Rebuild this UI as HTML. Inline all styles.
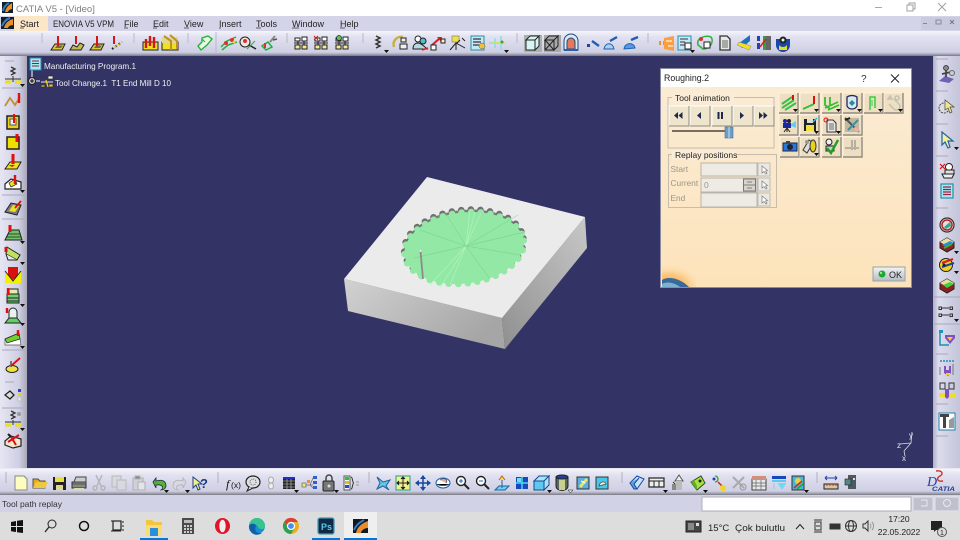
<!DOCTYPE html>
<html><head><meta charset="utf-8"><style>
html,body{margin:0;padding:0;width:960px;height:540px;overflow:hidden;background:#333366}
svg{display:block;font-family:"Liberation Sans",sans-serif;filter:blur(.35px)}
</style></head><body>
<svg width="960" height="540" viewBox="0 0 960 540" xmlns="http://www.w3.org/2000/svg">
<defs>
<linearGradient id="tb" x1="0" y1="0" x2="0" y2="1"><stop offset="0" stop-color="#f4f4fb"/><stop offset=".25" stop-color="#e0e0f0"/><stop offset=".85" stop-color="#cfcfe4"/><stop offset=".95" stop-color="#9a9aa8"/><stop offset="1" stop-color="#77777f"/></linearGradient>
<linearGradient id="lb" x1="0" y1="0" x2="1" y2="0"><stop offset="0" stop-color="#e6e6f3"/><stop offset=".7" stop-color="#cfcfe4"/><stop offset="1" stop-color="#a8a8b8"/></linearGradient>
<linearGradient id="rb" x1="0" y1="0" x2="1" y2="0"><stop offset="0" stop-color="#b0b0c4"/><stop offset=".2" stop-color="#dcdcee"/><stop offset="1" stop-color="#c4c4da"/></linearGradient>
<linearGradient id="lf" x1="0" y1="0" x2="1" y2=".5"><stop offset="0" stop-color="#d2d2d2"/><stop offset="1" stop-color="#a6a6a6"/></linearGradient>
<linearGradient id="rf" x1="0" y1="1" x2="1" y2="0"><stop offset="0" stop-color="#8f8f8f"/><stop offset="1" stop-color="#c8c8c8"/></linearGradient>
<linearGradient id="dlg" x1="0" y1="0" x2="0" y2="1"><stop offset="0" stop-color="#faecd6"/><stop offset="1" stop-color="#fde3ba"/></linearGradient>
<linearGradient id="ok" x1="0" y1="0" x2="0" y2="1"><stop offset="0" stop-color="#f4f4f4"/><stop offset="1" stop-color="#b4bcc8"/></linearGradient>
<radialGradient id="glow" cx="0.2" cy="1" r="1"><stop offset="0" stop-color="#f7a030"/><stop offset=".55" stop-color="#fbc880"/><stop offset="1" stop-color="#fde3ba" stop-opacity="0"/></radialGradient>

<g id="plate"><path d="M-7 7 L-3 1 H7 L4 7Z" fill="#dcc838" stroke="#222" stroke-width="1"/><path d="M-3 5H3L5 2.500H-1Z" fill="#6a6a50"/><path d="M0 -7V2" stroke="#d01818" stroke-width="2"/><path d="M-2 1L0 4L2 1Z" fill="#d01818"/></g>
<g id="plate2"><path d="M-7 7 L-4 2 L0 4 L3 0 L7 2 L4 7Z" fill="#c8b850" stroke="#222" stroke-width="1"/><path d="M-1 -7V1" stroke="#d01818" stroke-width="2"/></g>
<g id="bars"><path d="M-7 -1H8V7H-7Z" fill="#f0e020" stroke="#222"/><path d="M-4 -4V5M0 -7V3M4 -6V5" stroke="#d01818" stroke-width="2.400"/></g>
<g id="pers"><path d="M-6 -5h5v3h-5zM1 -6h5v4h-5z" fill="#fff" stroke="#222"/><path d="M-6 2h5v4h-5zM1 2h5v4h-5z" fill="#f5ea90" stroke="#222"/><path d="M-3 -2V2M3 -2V2M-7 0H7" stroke="#222"/></g>
<g id="green"><path d="M-7 5L5 -3M-7 1L3 -6M-4 7L7 0" stroke="#38c048" stroke-width="2"/><path d="M4 -8V-3" stroke="#e01010" stroke-width="2"/></g>
<g id="btn"><rect x="0" y="0" width="20" height="20" fill="#efe4cc"/><path d="M0 20V0H20" fill="none" stroke="#fff"/><path d="M20 0V20H0" fill="none" stroke="#8f8a80"/></g>
<g id="btn2"><rect x="0" y="0" width="19" height="20" fill="#efdfc2"/><path d="M0 20V0H19" fill="none" stroke="#fff3e0"/><path d="M19 0V20H0" fill="none" stroke="#8f8a80" stroke-width="1.400"/></g>
<g id="pick"><rect x="0" y="0" width="12" height="13" fill="#ece8e2" stroke="#bbb"/><path d="M4 3V10L6 8.500L8 11L9 10.300L7.500 8L9.500 7.500Z" fill="#fff" stroke="#888" stroke-width=".8"/></g>
</defs>

<rect width="960" height="540" fill="#333366"/>

<!-- title -->
<rect width="960" height="16" fill="#fff"/>
<rect x="2" y="2" width="11" height="11" fill="#10202c"/><path d="M5 12C6 7 9 5 12 3L12 9C10 9 8 11 8 12Z" fill="#e8902c"/><path d="M3 11C4 6 7 4 9 3" stroke="#3a7ac0" stroke-width="2" fill="none"/>
<text x="16" y="12" font-size="9.500" fill="#808080">CATIA V5 - [Video]</text>
<path d="M875 7.500h7" stroke="#a8a8a8"/><path d="M907 5h6v6h-6zM909 5V3h6v6h-2" fill="none" stroke="#a0a0a0"/><path d="M938 3l8 8M946 3l-8 8" stroke="#a0a0a0"/>

<!-- menu -->
<rect y="16" width="960" height="15" fill="#d4d4e9"/>
<rect x="921" y="17" width="39" height="13" fill="#cacade"/>
<rect x="14" y="16" width="34" height="15" fill="#fbe6c8"/>
<rect x="1" y="17" width="13" height="12" fill="#10202c"/><path d="M4 28C5 23 9 20 13 19L13 25C10 25 8 27 8 28Z" fill="#e8902c"/><path d="M2 26C4 21 7 19 10 18" stroke="#3a7ac0" stroke-width="2" fill="none"/>
<g font-size="9" fill="#222">
<text x="20" y="27">Start</text>
<text x="53" y="27" textLength="61" lengthAdjust="spacingAndGlyphs">ENOVIA V5 VPM</text>
<text x="124" y="27">File</text>
<text x="153" y="27">Edit</text>
<text x="184" y="27">View</text>
<text x="219" y="27">Insert</text>
<text x="256" y="27">Tools</text>
<text x="292" y="27">Window</text>
<text x="340" y="27">Help</text>
</g>
<g stroke="#333" stroke-width=".7"><path d="M20 28h4M124 28h4M153 28h4M184 28h5M219 28h2M256 28h5M292 28h7M340 28h5"/></g>
<path d="M923 23h4v1h-4z" fill="#888"/><path d="M936 20h5v4h-5z" fill="none" stroke="#8a8a98"/><path d="M950 20l4 4M954 20l-4 4" stroke="#777" stroke-width="1"/>

<!-- top toolbar -->
<rect y="31" width="960" height="25" fill="url(#tb)"/>
<g stroke="#b8b8c8"><path d="M42 33V43M134 33V43M188 33V43M216 32V54M287 33V43M363 33V43M517 33V43M648 33V43"/></g>
<g>
<use href="#plate" x="58" y="43"/><use href="#plate2" x="77" y="43"/><use href="#plate" x="97" y="43"/>
<g transform="translate(116 43)"><path d="M-2 -7V1" stroke="#d01818" stroke-width="2"/><path d="M-4 6L6 -1" stroke="#222" stroke-width="2" stroke-dasharray="2 2"/><path d="M-3 5L5 0" stroke="#f0d020" stroke-width="1"/></g>
<use href="#bars" x="150" y="43"/>
<g transform="translate(170 43)"><path d="M-8 -1H8V7H-8Z" fill="#f0e020" stroke="#222"/><path d="M-8 -6H8V0H-8Z" fill="#e0d890"/><path d="M-6 -7L1 -2V7M0 -8L7 -2V6" stroke="#c09020" stroke-width="2" fill="none"/></g>
<g transform="translate(205 43)"><path d="M-7 3L-3 -1 -3 -5 3 -7 7 -4 2 2 -4 7Z" fill="#e8f8e8" stroke="#20b030" stroke-width="1.300"/><path d="M-3 -4l3 3" stroke="#20b030"/></g>
<g transform="translate(229 43)"><path d="M-8 4L-2 -2 7 -6M-7 7L-1 2 8 -1" stroke="#20b040" stroke-width="1.500" fill="none"/><circle cx="-3" cy="0" r="2" fill="#e03030"/><circle cx="3" cy="-3" r="2" fill="#e03030"/><circle cx="5" cy="-1" r="1.500" fill="#e8d020"/></g>
<g transform="translate(248 43)"><circle cx="-3" cy="-1" r="5" fill="#f0e8e0" stroke="#222"/><circle cx="-3" cy="-2" r="2" fill="#e03030"/><path d="M1 2L8 6" stroke="#222" stroke-width="1.500"/><path d="M-1 6L7 -2" stroke="#20b040"/></g>
<g transform="translate(269 43)"><path d="M-7 3L-1 -1 3 4 -3 7Z" fill="none" stroke="#20b040" stroke-width="1.500"/><path d="M-4 0V5" stroke="#e03030" stroke-width="2"/><path d="M1 -1L6 -7" stroke="#888" stroke-width="2"/><path d="M4 -3l4 -1" stroke="#555" stroke-width="1.500"/></g>
<use href="#pers" x="301" y="43"/>
<g transform="translate(321 43)"><use href="#pers"/><path d="M-7 -7l4 4M-3 -7l-4 4" stroke="#d02020"/></g>
<g transform="translate(342 43)"><use href="#pers"/><circle cx="-3" cy="-5" r="2.500" fill="#60c060" stroke="#222" stroke-width=".7"/></g>
<g transform="translate(378 43)" fill="none" stroke="#333" stroke-width="1.500"><path d="M-2 -7l4 2-4 2 4 2-4 2 4 2-4 2"/></g>
<path d="M384 50h5l-2.500 3z" fill="#111"/>
<g transform="translate(400 43)"><path d="M-6 4C-8 -2 -3 -7 3 -6" fill="none" stroke="#c8b040" stroke-width="2.400"/><rect x="1" y="-5" width="5" height="4" fill="#eee" stroke="#222"/><rect x="0" y="1" width="7" height="5" fill="#f0f0f0" stroke="#222"/></g>
<g transform="translate(420 43)"><circle cx="-2" cy="-4" r="3" fill="#fff" stroke="#222"/><circle cx="3" cy="-2" r="3" fill="#50c0c8" stroke="#222"/><path d="M-7 6C-7 1 -4 0 -2 0S3 2 7 6Z" fill="#b8d8e0" stroke="#222"/><path d="M2 7l6-2" stroke="#d02020" stroke-width="1.500"/></g>
<g transform="translate(438 43)"><path d="M-7 3L2 -5" stroke="#d02020" stroke-width="2"/><path d="M-1 -6h5l-1 5z" fill="#d02020"/><rect x="-7" y="2" width="5" height="5" fill="#fff" stroke="#222"/><rect x="3" y="-4" width="4" height="4" fill="#f4f0c0" stroke="#222"/></g>
<g transform="translate(458 43)"><path d="M-2 -7V7M-2 0L7 5M-2 0L-8 7" stroke="#222" fill="none"/><path d="M-6 -7h7v6h-7z" fill="#f0e040" stroke="#888" stroke-width=".7"/><path d="M4 -5l3 3M-2 1l4-4" stroke="#222"/></g>
<g transform="translate(478 43)"><rect x="-7" y="-7" width="13" height="14" fill="#c8e8f0" stroke="#2090b0"/><path d="M-5 -4h8M-5 -1h8M-5 2h6" stroke="#334" stroke-width="1.200"/><circle cx="4" cy="3" r="3" fill="#eec040" stroke="#555" stroke-width=".5"/></g>
<g transform="translate(498 43)"><path d="M-9 0H5M-3 -5V5M3 -7V7" stroke="#80e0f0" stroke-width="1.500"/><path d="M-7 0H7" stroke="#e8e020" stroke-width="1.300"/><circle cx="4" cy="-1" r="1.500" fill="#40a040"/></g>
<path d="M504 50h5l-2.500 3z" fill="#111"/>
<rect x="524" y="35" width="18" height="17" fill="#a9b3ab"/>
<g transform="translate(533 43)" fill="#d8f4f4" stroke="#222"><path d="M-7 -3h9v10h-9zM-7 -3l4 -4h9l-4 4zM2 -3l4 -4v10l-4 4z"/></g>
<rect x="544" y="35" width="17" height="17" fill="#a9a9ab"/>
<g transform="translate(552 43)" fill="none" stroke="#222"><path d="M-7 -3h9v10h-9zM-7 -3l4 -4h9l-4 4zM2 -3l4 -4v10l-4 4zM-7 7l9-10M-7 -3l9 10"/></g>
<g transform="translate(571 43)"><path d="M-7 7V-2A7 7 0 0 1 7 -2V7Z" fill="#d8ecf4" stroke="#204880"/><path d="M-4 6V-1A4 4 0 0 1 4 -1V6Z" fill="#e87858" stroke="#204880"/><path d="M-7 7H7" stroke="#2860b0" stroke-width="2"/></g>
<g transform="translate(593 43)"><path d="M-1 -2l7 5" stroke="#2060b0" stroke-width="2.400"/><rect x="-6" y="1" width="3" height="3" fill="#204890"/></g>
<g transform="translate(611 43)"><path d="M-1 -2l7 -4" stroke="#2060b0" stroke-width="2.400"/><path d="M-7 6C-6 -1 2 -1 3 6Z" fill="#a8d0f0" stroke="#2060b0"/></g>
<g transform="translate(631 43)"><path d="M0 -3l7 -3" stroke="#2060b0" stroke-width="2.400"/><path d="M-7 6C-6 -1 3 -1 4 5Z" fill="#5898e8" stroke="#2060b0"/></g>
<g transform="translate(666 43)"><path d="M-3 -2H-1V2H-3ZM-7 -2h2v4h-2z" fill="#f09030"/><path d="M-2 -5L8 -7V8L-2 6Z" fill="#f8a040"/><path d="M0 -2l6 0M2 3l5 0" stroke="#fff"/></g>
<g transform="translate(685 43)"><rect x="-7" y="-7" width="13" height="14" fill="#c8e8f0" stroke="#2090b0"/><path d="M-5 -4h8M-5 -1h5M-5 2h5" stroke="#334"/><rect x="0" y="0" width="6" height="6" fill="#fff" stroke="#222"/></g>
<path d="M690 50h5l-2.500 3z" fill="#111"/>
<g transform="translate(705 43)"><path d="M-7 2C-9 -5 0 -8 6 -6C9 -2 6 6 -2 6Z" fill="none" stroke="#30b040" stroke-width="1.500"/><circle cx="-4" cy="-4" r="2" fill="#e03030"/><rect x="-1" y="-1" width="6" height="6" fill="#fff" stroke="#222"/></g>
<g transform="translate(725 43)"><path d="M-5 -7h7l3 3v11h-10z" fill="#e8e8e8" stroke="#333" stroke-width="1.300"/><path d="M-3 -3h6v8h-6z" fill="#a8a8a8"/></g>
<g transform="translate(745 43)"><path d="M-7 1L5 -8V-2L-3 5Z" fill="#2070c0"/><path d="M-8 2L4 7 6 3 -6 -1Z" fill="#f0e020" stroke="#888" stroke-width=".5"/></g>
<g transform="translate(764 43)"><rect x="1" y="-7" width="6" height="14" fill="#666"/><rect x="-1" y="-7" width="3" height="14" fill="#30a040"/><path d="M-7 -7h3v5h-3zM-7 0h3v6h-3z" fill="#2040c0"/><path d="M-4 4L2 -4" stroke="#d02020" stroke-width="1.500"/></g>
<g transform="translate(783 43)"><path d="M-7 -4h14v6a7 7 0 0 1-14 0z" fill="#1848a8"/><circle cx="0" cy="-3" r="3.500" fill="#222"/><path d="M-4 2A5 5 0 0 0 4 2L4 7H-4Z" fill="#f0d820"/><circle cx="0" cy="-3" r="1.500" fill="#eee"/></g>
</g>

<!-- left toolbar -->
<rect x="0" y="56" width="27" height="413" fill="url(#lb)"/>
<g stroke="#a8a8ba"><path d="M2 88H25M2 195H25M2 219H25M2 350H25M2 408H25M5 61H14M5 382H14"/></g>
<g>
<g transform="translate(13 76)"><path d="M-2 -9l4 2-4 2 4 2-4 2" stroke="#333" fill="none" stroke-width="1.300"/><path d="M-8 6H-2M2 6H8" stroke="#e8e020" stroke-width="3"/><path d="M0 0V6M-8 3H8" stroke="#333"/></g><path d="M20 84h5l-2.500 3z" fill="#111"/>
<g transform="translate(13 100)"><path d="M-8 6L-3 -2 2 5 7 -3" fill="none" stroke="#c09030" stroke-width="1.800"/><path d="M6 -7V3" stroke="#e01010" stroke-width="2.400"/></g>
<g transform="translate(13 122)"><rect x="-6" y="-6" width="12" height="13" fill="#e8d020" stroke="#222" stroke-width="1.500"/><rect x="-3" y="-3" width="6" height="6" fill="#eee" stroke="#555"/><path d="M1 -8V1" stroke="#e01010" stroke-width="2"/></g>
<g transform="translate(13 142)"><rect x="-6" y="-5" width="12" height="12" fill="#f0e000" stroke="#222" stroke-width="1.500"/><path d="M4 -8V0" stroke="#e01010" stroke-width="3"/></g>
<g transform="translate(13 162)"><path d="M-8 7L-3 0H8L4 7Z" fill="#f0e020" stroke="#222"/><path d="M0 -8V2" stroke="#e01010" stroke-width="3"/><path d="M-4 3h6l-3 2z" fill="#e01010"/></g>
<g transform="translate(13 183)"><path d="M-8 1L-2 -4 8 -1V6H-8Z" fill="#fff" stroke="#222" stroke-width="1.200"/><path d="M-4 0L2 -4 4 1 -2 4Z" fill="#f0e020" stroke="#222" stroke-width=".7"/><path d="M2 -8V1" stroke="#e01010" stroke-width="2.400"/></g><path d="M20 190h5l-2.500 3z" fill="#111"/>
<g transform="translate(13 208)"><path d="M-8 4L-2 -5 8 -3 4 7Z" fill="#7a7a8a" stroke="#222"/><path d="M-4 3L0 -3 6 -2 2 4Z" fill="#f0e020"/><path d="M2 0L8 -7" stroke="#e01010" stroke-width="1.800"/></g>
<g transform="translate(13 233)"><path d="M-8 7L-3 -3H6L9 7Z" fill="#70c068" stroke="#222"/><path d="M-5 1H7M-6 4H8" stroke="#222" stroke-width=".8"/><path d="M-3 -8V-1" stroke="#e01010" stroke-width="3"/></g><path d="M20 241h5l-2.500 3z" fill="#111"/>
<g transform="translate(13 254)"><path d="M-6 -7L7 1 4 6 -7 0Z" fill="#c0e060" stroke="#222"/><path d="M-7 0L-5 6 4 6" fill="#e8e8e8" stroke="#222"/><path d="M-7 -7V-2" stroke="#e01010" stroke-width="3"/></g><path d="M20 262h5l-2.500 3z" fill="#111"/>
<g transform="translate(13 275)"><path d="M-8 -4L0 6 8 -4V8H-8Z" fill="#f0f000"/><path d="M-5 -8H5V0L0 5 -5 0Z" fill="#d81010"/><path d="M-8 -4L0 6 8 -4" stroke="#222" fill="none"/></g>
<g transform="translate(13 296)"><rect x="-6" y="-2" width="12" height="9" fill="#70d070" stroke="#222"/><path d="M-6 2H6M-6 5H6" stroke="#222"/><path d="M-4 -7h9v5h-9z" fill="#e8e8b0" stroke="#222"/><path d="M-5 -8V-1" stroke="#e01010" stroke-width="2.400"/></g><path d="M20 304h5l-2.500 3z" fill="#111"/>
<g transform="translate(13 316)"><path d="M-4 2V-4A4 4 0 0 1 4 -4V2" fill="#e8f0f0" stroke="#222"/><path d="M-8 7L-4 2H4L8 7Z" fill="#60d060" stroke="#222"/><path d="M-6 -8V-3" stroke="#e01010" stroke-width="2.400"/></g><path d="M20 323h5l-2.500 3z" fill="#111"/>
<g transform="translate(13 338)"><path d="M-8 1L6 -5 8 7H-8Z" fill="#fff" stroke="#555" stroke-width=".7"/><path d="M-8 1L6 -5 7 1 -6 5Z" fill="#70d030" stroke="#222" stroke-width=".7"/><path d="M5 -8V-2" stroke="#e01010" stroke-width="2.400"/></g><path d="M20 346h5l-2.500 3z" fill="#111"/>
<g transform="translate(13 365)"><ellipse cx="-1" cy="4" rx="6" ry="3.500" fill="#f0e040" stroke="#222"/><path d="M-2 -4V2" stroke="#777" stroke-width="2"/><path d="M-2 1L7 -7" stroke="#e01010" stroke-width="2"/></g>
<g transform="translate(13 395)"><path d="M-8 0L-3 -4 1 0 -3 4Z" fill="#ddd" stroke="#222" stroke-width="1.300"/><rect x="5" y="-6" width="3" height="3" fill="#3040c0"/><rect x="5" y="-2" width="3" height="3" fill="#e8d020"/><rect x="5" y="2" width="3" height="4" fill="#e8e8e8" stroke="#aaa" stroke-width=".5"/></g>
<g transform="translate(13 420)"><path d="M-2 -9l4 2-4 2 4 2-4 2" stroke="#333" fill="none" stroke-width="1.300"/><circle cx="6" cy="-6" r="2" fill="#999"/><path d="M-8 5H-2M2 5H8" stroke="#e8e020" stroke-width="3"/><path d="M0 0V5M-8 2H8" stroke="#333"/></g><path d="M20 428h5l-2.500 3z" fill="#111"/>
<g transform="translate(13 440)"><path d="M-8 1L-2 -4 8 -1V6L0 8 -8 5Z" fill="#f0e8d0" stroke="#222" stroke-width="1.200"/><path d="M-3 -5L3 5M-5 2L6 -5" stroke="#e01010" stroke-width="2"/><path d="M-5 -6L-2 -3" stroke="#222" stroke-width="2"/></g>
</g>

<!-- right toolbar -->
<rect x="933" y="56" width="27" height="413" fill="url(#rb)"/>
<g stroke="#a8a8ba"><path d="M936 59H948M936 91H948M936 124H948M936 156H948M936 208H948M934 297H960M934 324H960M936 354H948M936 404H948M936 436H948"/></g>
<g>
<g transform="translate(947 74)"><path d="M-8 7L-2 2 7 5 2 9Z" fill="#7060b8"/><circle cx="-1" cy="-6" r="2.500" fill="#888" stroke="#222" stroke-width=".7"/><path d="M-1 -4V3M-5 0L4 -2" stroke="#444" stroke-width="1.800"/><circle cx="5" cy="-1" r="2.500" fill="#ccc" stroke="#666"/></g>
<g transform="translate(947 107)"><circle cx="-3" cy="1" r="5" fill="#ddd" stroke="#444" stroke-dasharray="2 1"/><path d="M-2 -7V3L1 1 3 6 5 5 3 0H7Z" fill="#f0e890" stroke="#444" stroke-width=".7"/></g>
<g transform="translate(946 140)"><path d="M-4 -8V5L-1 2 2 8 4 7 2 1H7Z" fill="#f0f0a0" stroke="#2060a0" stroke-width="1.200"/></g><path d="M954 147h5l-2.500 3z" fill="#111"/>
<g transform="translate(948 170)"><circle cx="1" cy="-3" r="3.500" fill="#fff" stroke="#222"/><rect x="-3" y="0" width="9" height="4" fill="#ddd" stroke="#222"/><path d="M-6 4H6L4 8H-4Z" fill="#eee" stroke="#222"/><path d="M-8 -6L-3 -1M-3 -6L-8 -1" stroke="#e01010" stroke-width="1.200"/></g>
<g transform="translate(947 191)"><rect x="-6" y="-7" width="12" height="14" fill="#a8e8f0" stroke="#2090b0" stroke-width="1.200"/><path d="M-4 -4H4M-4 -1.500H4M-4 1H4M-4 3.500H4" stroke="#a02040" stroke-width="1.200"/></g>
<g transform="translate(947 225)"><circle cx="0" cy="0" r="7" fill="#e0e0e0" stroke="#333" stroke-width="1.200"/><circle cx="0" cy="0" r="5" fill="none" stroke="#c02020" stroke-width="1.500"/><path d="M-3 2L3 -3 4 1 -1 4Z" fill="#30a890"/></g>
<g transform="translate(947 244)"><path d="M-7 -2L0 -6 7 -2V4L0 8 -7 4Z" fill="#902020" stroke="#222"/><path d="M-7 -2L0 -6 7 -2 0 2Z" fill="#e8e0a0"/><path d="M-5 1L3 -3 7 -1 -1 3" fill="#2090e0"/><path d="M-3 4L5 0" stroke="#30b040" stroke-width="2"/></g><path d="M954 251h5l-2.500 3z" fill="#111"/>
<g transform="translate(947 265)"><circle cx="-1" cy="0" r="6.500" fill="#f0d020" stroke="#222"/><path d="M-5 -2L6 -6" stroke="#d02020" stroke-width="2"/><path d="M-5 2L7 -2" stroke="#2040a0" stroke-width="2"/><circle cx="-3" cy="0" r="1.500" fill="#222"/></g><path d="M954 271h5l-2.500 3z" fill="#111"/>
<g transform="translate(947 285)"><path d="M-7 -2L0 -6 7 -2V4L0 8 -7 4Z" fill="#902020" stroke="#222"/><path d="M-7 -2L0 -6 7 -2 0 2Z" fill="#e8e0a0"/><path d="M-4 0L3 -3 7 -1 0 3Z" fill="#40d040"/></g>
<g transform="translate(946 312)" fill="none" stroke="#333"><rect x="-7" y="-5" width="2.500" height="2.500"/><rect x="4" y="-5" width="2.500" height="2.500"/><rect x="-7" y="2" width="2.500" height="2.500"/><rect x="4" y="2" width="2.500" height="2.500"/><path d="M-4 -4H3M-4 3H3"/></g><path d="M954 319h5l-2.500 3z" fill="#111"/>
<g transform="translate(947 338)"><path d="M-7 -7V7H2" fill="none" stroke="#2090b0" stroke-width="1.500"/><path d="M-2 -3H8V0L3 6 -2 0Z" fill="#8050c0"/><path d="M0 -1H6L3 3Z" fill="#f0d020"/><rect x="-8" y="-8" width="4" height="3" fill="#2090c0"/></g>
<g transform="translate(947 368)"><path d="M-7 -7H7" stroke="#2090b0" stroke-width="1.500" stroke-dasharray="2 1"/><path d="M-7 -1V7M6 -4V7" stroke="#777"/><path d="M-3 -2V5L1 8 4 5V-2L2 -2V2H-1V-2Z" fill="#8050c0"/><path d="M-1 5h4v2h-4z" fill="#f0d020"/></g>
<g transform="translate(947 390)"><rect x="-7" y="-7" width="5" height="6" fill="none" stroke="#333"/><rect x="2" y="-7" width="5" height="6" fill="none" stroke="#333"/><path d="M-8 3H8V7H-8Z" fill="#f0e020"/><path d="M-2 -1H2V7L0 9 -2 7Z" fill="#8050c0"/></g>
<g transform="translate(947 421)"><rect x="-8" y="-8" width="16" height="17" fill="#fff" stroke="#2080b0" stroke-width="1"/><path d="M-7 -7H2V-4H-1V7H-4V-4H-7Z" fill="#444"/><path d="M2 7V-1L7 -4V7Z" fill="#999"/></g>
</g>

<!-- 3D part -->
<path d="M344 279L348 311 505 349 502 318Z" fill="url(#lf)"/>
<path d="M502 318L505 349 587 248 585 217Z" fill="url(#rf)"/>
<path d="M427 177L585 217 502 318 344 279Z" fill="#ebebeb"/>
<g transform="rotate(-7 464 247)">
<ellipse cx="464" cy="245.500" rx="60" ry="35.500" fill="#7c7c7c"/>
<ellipse cx="464" cy="245.500" rx="60" ry="35.500" fill="none" stroke="#707070" stroke-width="6.500" stroke-linecap="round" stroke-dasharray="0 9.600"/>
<ellipse cx="464" cy="248" rx="60" ry="35.500" fill="#92e8a4"/>
<ellipse cx="464" cy="248" rx="60" ry="35.500" fill="none" stroke="#92e8a4" stroke-width="6.500" stroke-linecap="round" stroke-dasharray="0 9.600"/>
</g>
<g stroke="#b4f4c0" stroke-width=".7" opacity=".9"><path d="M466 246L475 212M466 246L470 210M466 246L481 213M466 246L430 285M466 246L440 288M466 246L450 285"/></g>
<g stroke="#70c888" stroke-width=".5" opacity=".8"><path d="M466 246L414 258M466 246L525 232M466 246L518 215M466 246L420 230M466 246L490 279M466 246L520 255M466 246L445 212"/></g>
<path d="M420.500 251L423 279" stroke="#8c8c8c" stroke-width="1.800"/>
<circle cx="420.500" cy="251" r="1" fill="#eee"/>

<!-- spec tree -->
<path d="M32 66V80H36" stroke="#fff" fill="none"/>
<rect x="30" y="58" width="11" height="12" fill="#a8e8f0" stroke="#2090b0"/>
<path d="M32 61h7M32 63.500h7M32 66h7" stroke="#902040"/>
<circle cx="32" cy="81" r="3.500" fill="#ccc" stroke="#222"/><path d="M30 81h4M32 79v4" stroke="#111"/>
<path d="M36 81h4" stroke="#fff"/>
<g transform="translate(47 81)"><path d="M-6 1H6" stroke="#e8e8e8"/><path d="M-5 -2l3-3M1 -5h5v3h-5z" fill="#eee" stroke="#333" stroke-width=".8"/><path d="M-6 4h4v2h-4zM2 3h4v3h-4z" fill="#e0c040" stroke="#333" stroke-width=".8"/><path d="M-1 -1L1 6" stroke="#f0d020" stroke-width="1.300"/></g>
<text x="44" y="69" font-size="8.500" fill="#f0f0f0" textLength="92" lengthAdjust="spacingAndGlyphs">Manufacturing Program.1</text>
<text x="55" y="86" font-size="8.500" fill="#f0f0f0" xml:space="preserve" textLength="116" lengthAdjust="spacingAndGlyphs">Tool Change.1  T1 End Mill D 10</text>

<!-- axis -->
<g stroke="#ddd" stroke-width=".8" fill="none"><path d="M904 451L911 443 912 432M911 443L900 444M904 451L905 456"/></g>
<g fill="#e8e8e8" font-size="8"><text x="909" y="438">y</text><text x="897" y="448">z</text><text x="902" y="461">x</text></g>

<!-- dialog -->
<rect x="660" y="68" width="252" height="220" fill="#8c8ca0"/>
<rect x="661" y="69" width="250" height="218" fill="url(#dlg)"/>
<rect x="661" y="69" width="250" height="18" fill="#fff"/>
<text x="664" y="81" font-size="8.800" fill="#222">Roughing.2</text>
<text x="861" y="82" font-size="10" fill="#333">?</text>
<path d="M891 74.500l8 8M899 74.500l-8 8" stroke="#222" stroke-width="1"/>
<rect x="662" y="264" width="34" height="23" fill="url(#glow)"/>
<path d="M662 280C668 276 680 278 689 287H662Z" fill="#3a6a9c"/><path d="M662 284C667 281 675 283 680 287H662Z" fill="#7eb0d0"/>

<rect x="668" y="97.500" width="106" height="50.500" fill="none" stroke="#c4bdb0"/>
<rect x="672" y="93" width="62" height="10" fill="#faecd6"/>
<text x="675" y="101" font-size="8.500" fill="#222">Tool animation</text>
<rect x="668.500" y="154.500" width="108" height="53" fill="none" stroke="#c4bdb0"/>
<rect x="672" y="150" width="64" height="10" fill="#faecd6"/>
<text x="675" y="158" font-size="8.500" fill="#222">Replay positions</text>

<g transform="translate(669 106)"><use href="#btn"/></g>
<g transform="translate(690 106)"><use href="#btn"/></g>
<g transform="translate(712 106)"><use href="#btn"/></g>
<g transform="translate(733 106)"><use href="#btn"/></g>
<g transform="translate(754 106)"><use href="#btn"/></g>
<g fill="#1c2a50"><path d="M678 112L674 115.500 678 119ZM682.500 112L678.500 115.500 682.500 119Z"/><path d="M701 112L697 115.500 701 119Z"/><path d="M717.500 112h2v7h-2zM721 112h2v7h-2z"/><path d="M740 112L744 115.500 740 119Z"/><path d="M759 112L763 115.500 759 119ZM763.500 112L767.500 115.500 763.500 119Z"/></g>
<path d="M672 131H727" stroke="#444" stroke-width="1.500"/>
<rect x="725" y="127" width="8" height="11" fill="#6b9fc8" stroke="#4a6f96" stroke-width=".6"/><path d="M729 127V138" stroke="#c8dcee" stroke-width="1"/>

<g font-size="8.300" fill="#9a958a"><text x="670.500" y="172">Start</text><text x="670.500" y="186">Current</text><text x="670.500" y="201">End</text></g>
<rect x="701" y="163" width="56" height="13" fill="#eeebe4" stroke="#b8b4ac"/>
<rect x="701" y="178" width="56" height="14" fill="#eeebe4" stroke="#b8b4ac"/>
<rect x="701" y="193" width="56" height="14" fill="#eeebe4" stroke="#b8b4ac"/>
<text x="704" y="188" font-size="8.500" fill="#999">0</text>
<rect x="743.500" y="179" width="12" height="12" fill="#d8d4cc" stroke="#777"/><path d="M744 185h11M747 182h5M747 188h5" stroke="#666" stroke-width=".8"/>
<use href="#pick" x="758" y="163"/><use href="#pick" x="758" y="178"/><use href="#pick" x="758" y="193"/>

<g transform="translate(779 93)"><use href="#btn2"/></g><g transform="translate(800 93)"><use href="#btn2"/></g><g transform="translate(822 93)"><use href="#btn2"/></g><g transform="translate(843 93)"><use href="#btn2"/></g><g transform="translate(864 93)"><use href="#btn2"/></g><g transform="translate(884 93)"><use href="#btn2"/></g>
<g transform="translate(779 115)"><use href="#btn2"/></g><g transform="translate(800 115)"><use href="#btn2"/></g><g transform="translate(822 115)"><use href="#btn2"/></g><g transform="translate(843 115)"><use href="#btn2"/></g>
<g transform="translate(780 137)"><use href="#btn2"/></g><g transform="translate(800 137)"><use href="#btn2"/></g><g transform="translate(822 137)"><use href="#btn2"/></g><g transform="translate(843 137)"><use href="#btn2"/></g>

<use href="#green" x="789" y="103"/>
<g transform="translate(810 103)"><path d="M-7 6L4 1" stroke="#30c030" stroke-width="1.800"/><path d="M4 -7V1" stroke="#e01010" stroke-width="2"/></g>
<g transform="translate(831 103)"><path d="M-6 -6V2L-1 6M-1 -6V2" stroke="#30c030" stroke-width="1.800" fill="none"/><path d="M-6 5L7 -1M-3 7L8 2" stroke="#30c030" stroke-width="1.600"/></g>
<g transform="translate(852 103)"><path d="M-5 -6C-2 -8 2 -8 5 -6V3C3 7 -3 7 -5 3Z" fill="#d8e8f0" stroke="#202860" stroke-width="1.300"/><path d="M0 -3l3 3-3 3-3-3z" fill="#2090a0"/></g>
<g transform="translate(873 103)"><path d="M-3 7V-6H2V5" fill="none" stroke="#30d040" stroke-width="1.500"/><path d="M-1 -3V3" stroke="#30d040"/></g>
<g transform="translate(894 103)" stroke="#c4c0b4" fill="none" stroke-width="1.500"><path d="M-6 -4l2-3 2 3zM0 -4l5 5a3 3 0 0 1-5 5l-5-5"/><circle cx="3" cy="-5" r="2"/></g>
<path d="M793 109h5l-2.500 3zM814 109h5l-2.500 3zM836 109h5l-2.500 3zM857 109h5l-2.500 3zM878 109h5l-2.500 3zM898 109h5l-2.500 3z" fill="#111"/>

<g transform="translate(789 125)"><rect x="-6" y="-2" width="8" height="5" fill="#1828a0"/><circle cx="-4" cy="-4" r="2" fill="#1828a0"/><circle cx="0" cy="-4" r="2" fill="#222"/><path d="M2 -1L7 -4V3L2 1Z" fill="#60d0f0"/><path d="M-2 3L-5 7M-2 3V7M-2 3L1 7" stroke="#222"/></g>
<g transform="translate(810 125)"><rect x="-6" y="-6" width="12" height="12" fill="#222"/><rect x="-3" y="-6" width="6" height="4" fill="#ddd"/><rect x="-4" y="0" width="8" height="6" fill="#f0e040"/><path d="M3 -3l4-4" stroke="#30c0e0" stroke-width="1.500"/></g><path d="M814 131h5l-2.500 3z" fill="#111"/>
<g transform="translate(831 125)"><path d="M-4 -5h6l3 3v9h-9z" fill="#e8e8e8" stroke="#333"/><path d="M-2 -2h5v7h-5z" fill="#a8a8a8"/><circle cx="-5" cy="-5" r="2" fill="none" stroke="#e01010"/></g><path d="M836 131h5l-2.500 3z" fill="#111"/>
<g transform="translate(852 125)"><path d="M-7 -7H7V7H-7Z" fill="#c0b8a0"/><path d="M-7 -7L7 7" stroke="#555" stroke-width="2"/><path d="M-4 5L6 -5" stroke="#4090a0" stroke-width="2"/><path d="M-7 -5L-2 -7" stroke="#222" stroke-width="2"/><path d="M2 3L7 6" stroke="#f0b0a0" stroke-width="3"/></g>

<g transform="translate(790 146)"><rect x="-7" y="-3" width="14" height="8" fill="#2878d8" stroke="#224"/><circle cx="0" cy="1" r="3" fill="#223"/><rect x="-4" y="-5" width="4" height="2" fill="#444"/></g>
<g transform="translate(810 146)"><path d="M-7 4L-1 -6 3 -3 -3 7Z" fill="#ddd" stroke="#333"/><ellipse cx="3" cy="0" rx="3" ry="6" fill="#e8d020" stroke="#333"/><circle cx="-3" cy="-4" r="2" fill="#999"/></g><path d="M814 153h5l-2.500 3z" fill="#111"/>
<g transform="translate(831 146)"><circle cx="-2" cy="-4" r="3" fill="#eee" stroke="#222"/><path d="M-5 0h8v5h-8z" fill="#ccc" stroke="#222"/><path d="M-4 2L0 7 7 -6" stroke="#20a020" stroke-width="2.400" fill="none"/></g>
<g transform="translate(852 146)" stroke="#b4b0a4" fill="none"><path d="M-7 2H7M0 -6V4M3 -6V4" stroke-width="2"/></g>

<rect x="873" y="267" width="32" height="14" fill="url(#ok)" stroke="#9aa0a8"/>
<circle cx="882" cy="274" r="3.500" fill="#1ea82c"/><circle cx="881" cy="273" r="1.200" fill="#9ce0a0"/>
<text x="889" y="278" font-size="9" fill="#222">OK</text>

<!-- bottom toolbar -->
<rect y="468" width="960" height="2" fill="#e8e8f0"/>
<rect y="469" width="960" height="26" fill="url(#tb)"/>
<g stroke="#b0b0c0"><path d="M6 472V483M218 472V483M369 472V483M622 472V483M817 472V483"/></g>
<g>
<g transform="translate(21 483)"><path d="M-6 -7H3L6 -4V7H-6Z" fill="#fdfdc0" stroke="#888"/></g>
<g transform="translate(40 482)"><path d="M-7 6V-3H-2L0 -1H5V6Z" fill="#e8a820" stroke="#554"/><path d="M-7 6L-4 0H8L5 6Z" fill="#f0c840"/></g>
<g transform="translate(59 483)"><rect x="-6" y="-6" width="13" height="13" fill="#222"/><rect x="-4" y="-6" width="9" height="5" fill="#e8e040"/><rect x="-3" y="2" width="7" height="5" fill="#dcd890"/></g>
<g transform="translate(79 483)"><path d="M-7 -1H7V5H-7Z" fill="#888" stroke="#333"/><path d="M-3 -6H7V-1H-5Z" fill="#ccc" stroke="#444"/><path d="M-5 5H5V7H-5Z" fill="#d8e0a0"/><path d="M-7 1h14" stroke="#555"/></g>
<g transform="translate(99 483)" stroke="#b4b4b8" fill="none" stroke-width="1.500"><path d="M-3 -8L2 3M3 -8L-2 3"/><circle cx="-4" cy="5" r="2"/><circle cx="4" cy="5" r="2"/></g>
<g transform="translate(119 483)" stroke="#b8b8bc" fill="#d8d8e0"><rect x="-7" y="-7" width="9" height="11"/><rect x="-2" y="-3" width="9" height="10"/></g>
<g transform="translate(139 483)" stroke="#b0b0b4" fill="#d0d0d8"><rect x="-6" y="-5" width="10" height="12"/><rect x="-1" y="-1" width="7" height="8" fill="#e4e4e8"/><rect x="-4" y="-7" width="5" height="3" fill="#888"/></g>
<g transform="translate(159 483)"><path d="M-6 -1L-3 -5V-2C3 -4 7 -2 7 3 7 5 5 7 2 7 5 5 4 1 -3 2V5Z" fill="#50b830" stroke="#224" stroke-width=".8"/></g><path d="M164 490h5l-2.500 3z" fill="#111"/>
<g transform="translate(180 483)"><path d="M6 -1L3 -5V-2C-3 -4 -7 -2 -7 3 -7 5 -5 7 -2 7 -5 5 -4 1 3 2V5Z" fill="#d8d8e0" stroke="#b0b0b8" stroke-width=".8"/></g><path d="M185 490h5l-2.500 3z" fill="#111"/>
<g transform="translate(200 483)"><path d="M-7 -6V5L-4 2 -2 7 0 6 -2 1H2Z" fill="#f0f090" stroke="#204080"/><text x="0" y="5" font-size="13" font-weight="bold" fill="#203880">?</text></g>
<text x="226" y="488" font-size="12" font-family="Liberation Serif" font-style="italic" fill="#111">f</text><text x="231" y="488" font-size="8.500" fill="#111">(x)</text>
<g transform="translate(253 483)"><ellipse cx="0" cy="-1" rx="7" ry="6" fill="#e0e0e4" stroke="#222" stroke-width="1.200"/><path d="M-4 4L-6 8 0 5" fill="#eee" stroke="#222"/><circle cx="0" cy="-1" r="3" fill="none" stroke="#666" stroke-dasharray="1 1"/></g>
<g transform="translate(271 483)"><ellipse cx="0" cy="-3" rx="2.500" ry="3" fill="#eee" stroke="#aaa"/><ellipse cx="0" cy="3" rx="2.500" ry="3" fill="#eee" stroke="#aaa"/></g>
<g transform="translate(289 483)"><rect x="-6" y="-6" width="12" height="12" fill="#222"/><rect x="-6" y="-6" width="12" height="2" fill="#2030c0"/><path d="M-6 -2H6M-6 1H6M-6 4H6M-2 -4V6M2 -4V6" stroke="#ccc" stroke-width=".6"/></g><path d="M294 490h5l-2.500 3z" fill="#111"/>
<g transform="translate(310 483)"><rect x="-8" y="0" width="4" height="4" fill="#f0e080" stroke="#555" stroke-width=".6"/><rect x="-3" y="-3" width="3" height="3" fill="#e09040"/><rect x="3" y="-7" width="4" height="3" fill="#3060d0"/><rect x="3" y="-2" width="4" height="3" fill="#3060d0"/><rect x="3" y="3" width="4" height="3" fill="#3060d0"/><path d="M-4 2H0L3 -5M0 2H3M0 2L3 5" stroke="#666" stroke-width=".7" fill="none"/></g>
<g transform="translate(329 483)"><rect x="-6" y="-2" width="11" height="10" rx="1" fill="#777" stroke="#222"/><path d="M-3 -2V-5A3 3 0 0 1 3 -5V-2" fill="none" stroke="#444" stroke-width="1.500"/><circle cx="0" cy="3" r="1.500" fill="#ddd"/></g><path d="M334 490h5l-2.500 3z" fill="#111"/>
<g transform="translate(351 483)"><rect x="-7" y="-7" width="6" height="14" fill="#f8f8f8" stroke="#555"/><rect x="-6" y="-6" width="4" height="3" fill="#30c030"/><rect x="-6" y="-2" width="4" height="3" fill="#e8b820"/><rect x="-6" y="2" width="4" height="3" fill="#2050c0"/><path d="M0 -6C2 -6 1 0 3 0 1 0 2 6 0 6" fill="none" stroke="#333"/><path d="M5 -1h3M5 2h3" stroke="#999"/></g>
<g transform="translate(383 483)"><path d="M-6 -6L0 -1 7 -3 3 3 6 7 0 3 -6 6 -3 0Z" fill="#60c8e0" stroke="#2060a0" stroke-width="1"/></g>
<g transform="translate(403 483)"><rect x="-7" y="-7" width="14" height="14" fill="#f0f090" stroke="#20a080"/><path d="M0 -6V6M-6 0H6" stroke="#222"/><path d="M-2 -4L0 -6 2 -4M-2 4L0 6 2 4M-4 -2L-6 0 -4 2M4 -2L6 0 4 2" fill="#222" stroke="#222"/></g>
<g transform="translate(423 483)"><path d="M0 -7V7M-7 0H7" stroke="#1848a0" stroke-width="1.500"/><path d="M-3 -4L0 -8 3 -4ZM-3 4L0 8 3 4ZM-4 -3L-8 0 -4 3ZM4 -3L8 0 4 3Z" fill="#1848a0"/></g>
<g transform="translate(443 483)"><ellipse cx="0" cy="0" rx="7" ry="5" fill="#fff" stroke="#2060a0"/><path d="M-7 1C-3 3 3 3 7 1" stroke="#2060a0"/><path d="M-3 -3C1 -6 6 -3 3 0" fill="#e8a8a0" stroke="#444" stroke-width=".7"/></g>
<g transform="translate(462 483)"><circle cx="-1" cy="-2" r="4.500" fill="#fff" stroke="#222" stroke-width="1.400"/><path d="M2 1L7 6" stroke="#222" stroke-width="2"/><path d="M-3 -2H1M-1 -4V0" stroke="#2060c0"/></g>
<g transform="translate(482 483)"><circle cx="-1" cy="-2" r="4.500" fill="#fff" stroke="#222" stroke-width="1.400"/><path d="M2 1L7 6" stroke="#222" stroke-width="2"/><path d="M-3 -2H1" stroke="#2060c0"/></g>
<g transform="translate(502 483)"><path d="M-7 7L-3 3H7L3 7Z" fill="#70d0f0" stroke="#2060a0"/><path d="M0 5V-5" stroke="#2060a0"/><path d="M-3 -3L0 -7 3 -3" fill="#f0e040" stroke="#c06020"/></g>
<g transform="translate(522 483)"><rect x="-6" y="-6" width="12" height="12" fill="#1848c0"/><path d="M0 -6V6M-6 0H6" stroke="#50d8f0" stroke-width="1.500"/><rect x="-5" y="-5" width="4" height="4" fill="#70e0f0"/></g>
<g transform="translate(541 483)"><path d="M-7 -2H3V7H-7Z" fill="#60c8f0" stroke="#184890"/><path d="M-7 -2L-2 -7H8L3 -2ZM3 -2L8 -7V2L3 7Z" fill="#a8e4f8" stroke="#184890"/></g><path d="M547 490h5l-2.500 3z" fill="#111"/>
<g transform="translate(562 483)"><path d="M-6 -6H6V3C6 9 -6 9 -6 3Z" fill="#5a6860" stroke="#222"/><path d="M-3 -6V7H3V-6Z" fill="#c8d090"/><ellipse cx="0" cy="-6" rx="6" ry="2" fill="#2040a0" stroke="#222"/></g><path d="M568 490h5l-2.500 3z" fill="#eee" stroke="#111" stroke-width=".5"/>
<g transform="translate(583 483)"><rect x="-6" y="-6" width="12" height="12" fill="#58b0e0" stroke="#333"/><path d="M-3 4L4 -4" stroke="#f0e060" stroke-width="3"/><path d="M-2 -2L2 0" stroke="#fff"/></g>
<g transform="translate(602 483)"><rect x="-6" y="-6" width="12" height="12" fill="#48c8e8" stroke="#333"/><path d="M-3 3C-2 -2 3 -2 4 1Z" fill="#eee" stroke="#444" stroke-width=".7"/></g>
<g transform="translate(637 483)"><path d="M-7 0L0 -7 7 -4 0 6Z" fill="#c8e4f8" stroke="#1848a0"/><path d="M-7 0L-3 6 0 6 -3 1 2 -5" fill="#60a0e0" stroke="#1848a0"/></g>
<g transform="translate(657 482)"><rect x="-8" y="-4" width="15" height="9" fill="#eee" stroke="#222" stroke-width="1.200"/><path d="M-8 -1H7M-3 -1V5M2 -1V5" stroke="#222"/></g><path d="M663 490h5l-2.500 3z" fill="#111"/>
<g transform="translate(679 483)"><path d="M0 -8L4 -2H-4Z" fill="#eee" stroke="#555"/><rect x="-3" y="-2" width="6" height="9" fill="#bbb"/><rect x="-7" y="1" width="4" height="6" fill="#888"/><path d="M-6 -1l2 2" stroke="#333"/></g>
<g transform="translate(698 483)"><path d="M-7 -1L3 -7 7 0 -1 7Z" fill="#a8e040" stroke="#305018"/><path d="M-7 -1L-1 7 -1 3 -4 -3" fill="#60b020"/><circle cx="2" cy="-2" r="1.500" fill="#222"/></g><path d="M703 490h5l-2.500 3z" fill="#111"/>
<g transform="translate(718 482)"><path d="M-3 -6A3 3 0 1 1 -3 0" fill="none" stroke="#30a030" stroke-width="1.300"/><circle cx="-4" cy="-3" r="1.500" fill="#2040c0"/><path d="M0 0l4 4" stroke="#d02020" stroke-width="1.500"/><circle cx="5" cy="6" r="3" fill="#f0d820"/></g>
<g transform="translate(739 483)" stroke="#aaa" fill="none"><path d="M-6 -6L5 5M5 -6L-6 5" stroke-width="2"/><circle cx="4" cy="4" r="3" stroke="#999"/></g>
<g transform="translate(759 483)"><rect x="-7" y="-4" width="14" height="11" fill="#e8e8e8" stroke="#444"/><rect x="-7" y="-7" width="14" height="4" fill="#d09080"/><path d="M-7 0H7M-7 3H7M-3 -3V7M2 -3V7" stroke="#666" stroke-width=".7"/></g>
<g transform="translate(779 482)"><rect x="-7" y="-6" width="14" height="3" fill="#1848c0"/><rect x="-7" y="-2" width="14" height="2" fill="#60c8e8"/><path d="M-5 1V7M-1 1L3 7 7 1" fill="#70d8f0" stroke="#70d8f0"/></g>
<g transform="translate(798 483)"><rect x="-6" y="-7" width="12" height="14" fill="#48b8d8" stroke="#333"/><circle cx="0" cy="-2" r="3" fill="#f0d040"/><path d="M-4 5L4 -2" stroke="#c03030" stroke-width="1.500"/><path d="M-1 6L5 1" stroke="#30a030" stroke-width="1.500"/></g><path d="M804 490h5l-2.500 3z" fill="#111"/>
<g transform="translate(831 483)"><path d="M-6 -5H6M-6 -5l2-2M-6 -5l2 2M6 -5l-2-2M6 -5l-2 2" stroke="#2040a0" fill="none"/><rect x="-7" y="1" width="14" height="5" fill="#d8c8a0" stroke="#222"/><path d="M-4 1v2M-1 1v2M2 1v2M5 1v2" stroke="#c03030"/></g>
<g transform="translate(851 482)"><rect x="-3" y="-7" width="8" height="14" fill="#505860"/><rect x="-6" y="-3" width="6" height="6" fill="#508888" stroke="#222" stroke-width=".6"/><rect x="2" y="-4" width="2" height="2" fill="#ddd"/></g>
</g>
<!-- CATIA logo -->
<text x="927" y="486" font-size="14" font-style="italic" fill="#2840a0" font-family="Liberation Serif">D</text>
<path d="M936 471C942 470 944 474 940 476 936 478 937 482 943 481" fill="none" stroke="#d03020" stroke-width="1.400"/>
<text x="932" y="491" font-size="6.500" font-weight="bold" font-style="italic" fill="#1c3a90" textLength="23" lengthAdjust="spacingAndGlyphs">CATIA</text>

<!-- status bar -->
<rect y="495" width="960" height="17" fill="#d2d2e6"/>
<text x="2" y="507" font-size="8.500" fill="#333">Tool path replay</text>
<rect x="702" y="497" width="209" height="14" fill="#fff" stroke="#b0b0b8"/>
<rect x="913" y="497" width="20" height="14" fill="#c0c0cc" stroke="#e6e6f0"/><rect x="935" y="497" width="24" height="14" fill="#c0c0cc" stroke="#e6e6f0"/>
<path d="M921 500h6v6h-6" fill="none" stroke="#e8e8f0"/><circle cx="947" cy="503" r="3.500" fill="none" stroke="#e8e8f0"/>

<!-- taskbar -->
<rect y="512" width="960" height="28" fill="#dddddd"/>
<rect x="344" y="512" width="33" height="28" fill="#efefef"/>
<rect x="140" y="538" width="28" height="2" fill="#0078d7"/><rect x="312" y="538" width="28" height="2" fill="#0078d7"/><rect x="344" y="538" width="33" height="2" fill="#0078d7"/>
<path d="M11 522L16 521V526H11ZM17 520.800L23 520V526H17ZM11 527H16V532L11 531.300ZM17 527H23V533L17 532.200Z" fill="#111"/>
<g fill="none" stroke="#222"><circle cx="52" cy="524" r="4"/><path d="M49 527L45 532" stroke-width="1.300"/><circle cx="84" cy="526" r="4.500" stroke-width="1.500" stroke="#111"/><rect x="113" y="521" width="8" height="9" stroke-width="1.200"/><path d="M111 521H116M111 531h10M123 521v2M123 525v2M123 529v2" stroke-width="1"/></g>
<path d="M146 520h6l2 2h8v14h-16Z" fill="#f4c542"/><path d="M146 525h16v11h-16Z" fill="#fadb76"/><path d="M150 528h8v8h-2v-4h-4v4h-2Z" fill="#2a8fd8"/><rect x="150" y="532" width="8" height="4" fill="#2a8fd8"/>
<rect x="182" y="518" width="12" height="16" fill="#4a4a4a"/><rect x="184" y="520" width="8" height="3" fill="#bbb"/><path d="M184 525h2v2h-2zM187 525h2v2h-2zM190 525h2v2h-2zM184 528h2v2h-2zM187 528h2v2h-2zM190 528h2v2h-2zM184 531h2v2h-2zM187 531h2v2h-2zM190 531h2v2h-2z" fill="#ccc"/>
<ellipse cx="222.500" cy="526" rx="7.500" ry="8" fill="#e3132a"/><ellipse cx="222.500" cy="526" rx="3.200" ry="6.300" fill="#eeeeee"/>
<circle cx="257" cy="526" r="8" fill="#1a8fd0"/><path d="M249 526A8 8 0 0 1 265 526C265 530 259 530 258 527 256 522 250 523 249 526Z" fill="#38c490"/><path d="M256 526C254 530 256 534 262 533A8 8 0 0 1 249 526C250 523 255 523 256 526Z" fill="#1060a8"/>
<circle cx="291" cy="526" r="8" fill="#e8b020"/><path d="M284 522A8 8 0 0 1 298 522H291A4 4 0 0 0 287 525Z" fill="#dc4035"/><path d="M284 522A8 8 0 0 0 291 534L295 527 290 530 287 525Z" fill="#30a050"/><circle cx="291" cy="526" r="3.500" fill="#4a8cf0" stroke="#fff" stroke-width="1.200"/>
<rect x="318" y="518" width="16" height="16" rx="2" fill="#0f2a44" stroke="#4a98b8" stroke-width="1.300"/><text x="321" y="530" font-size="9" font-weight="bold" fill="#5ac8f0">Ps</text>
<rect x="353" y="519" width="15" height="14" fill="#0c1a28"/><path d="M356 533C357 527 362 523 368 521V528C364 528 361 531 361 533Z" fill="#e88c2c"/><path d="M354 530C356 525 360 522 364 520" stroke="#3a7ac0" stroke-width="2" fill="none"/>

<rect x="686" y="521" width="15" height="11" fill="#444" stroke="#222"/><rect x="688" y="523" width="6" height="7" fill="#888"/><rect x="696" y="523" width="3" height="3" fill="#ddd"/>
<text x="708" y="531" font-size="9.500" fill="#222">15°C</text>
<text x="735" y="531" font-size="9.500" fill="#222" textLength="50" lengthAdjust="spacingAndGlyphs">Çok bulutlu</text>
<path d="M796 529L800 524.500 804 529" fill="none" stroke="#222" stroke-width="1"/>
<g fill="none" stroke="#333"><rect x="815" y="522" width="6" height="8"/><path d="M814 520h8M814 532h8M816 526h4"/><rect x="830" y="524" width="10" height="5" fill="#333"/><circle cx="851" cy="526" r="5.500"/><ellipse cx="851" cy="526" rx="2.500" ry="5.500"/><path d="M845.500 526h11"/></g>
<path d="M863 524h2l3-3v10l-3-3h-2Z" fill="none" stroke="#333"/><path d="M870 523.500a4 4 0 0 1 0 5M872 522a6 6 0 0 1 0 8" fill="none" stroke="#999"/>
<text x="899" y="522" font-size="8.500" fill="#222" text-anchor="middle">17:20</text>
<text x="899" y="535" font-size="8.500" fill="#222" text-anchor="middle">22.05.2022</text>
<path d="M931 521h11v9h-6l-2 2v-2h-3Z" fill="#222"/><circle cx="942" cy="532" r="4.500" fill="#ddd" stroke="#555"/><text x="942" y="535" font-size="7" fill="#222" text-anchor="middle">1</text>
</svg>
</body></html>
